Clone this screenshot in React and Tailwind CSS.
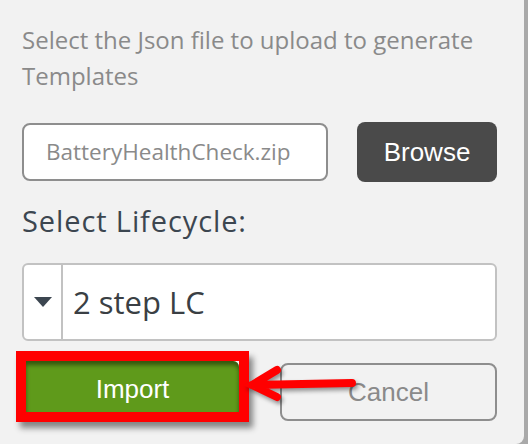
export default function App() {
  return (
    <div className="w-[528px] h-[444px] bg-[#a9a9a9] overflow-hidden">
      <div
        className="relative w-[524px] h-[444px] bg-[#f2f2f2] rounded-br-[8px] px-[22px] pt-[22px]"
        style={{ fontFamily: "'Open Sans', 'Liberation Sans', sans-serif" }}
      >
        <p className="text-[24px] leading-[36px] text-[#8a8a8a]">
          Select the Json file to upload to generate Templates
        </p>

        <div className="mt-[28px] flex items-center gap-[29px]">
          <div className="w-[306px] h-[58px] rounded-[8px] border-2 border-[#8e8e8e] bg-white flex items-center pl-[22px] text-[22.5px] text-[#8a8a8a]">
            BatteryHealthCheck.zip
          </div>
          <button
            type="button"
            className="w-[140px] h-[60px] rounded-[8px] bg-[#4a4a4a] text-white text-[26px] font-['Liberation_Sans',sans-serif]"
          >
            Browse
          </button>
        </div>

        <div className="mt-[23px] text-[29px] tracking-[0.9px] leading-[32px] text-[#3c4650]">Select Lifecycle:</div>

        <div className="mt-[26px] w-[475px] h-[78px] rounded-[6px] border-2 border-[#c2c2c2] bg-white flex">
          <div className="w-[39px] border-r-2 border-[#c2c2c2] flex items-center justify-center">
            <svg width="18" height="10" viewBox="0 0 18 10">
              <path d="M0 0 H18 L9 10 Z" fill="#3c4650" />
            </svg>
          </div>
          <div className="flex items-center pl-[10px] text-[31px] text-[#3a3f44]">2 step LC</div>
        </div>

        <div className="mt-[10px] flex items-start">
          <div className="-ml-[6px] border-[10px] border-[#ff0000] shadow-[4px_6px_6px_rgba(0,0,0,0.45)]">
            <button
              type="button"
              className="w-[213px] h-[51px] pt-[5px] bg-[#5f9a1b] text-white text-[26px] font-['Liberation_Sans',sans-serif] rounded-tr-[6px] shadow-[inset_0_4px_4px_rgba(0,0,0,0.45)]"
            >
              Import
            </button>
          </div>
          <button
            type="button"
            className="ml-[31px] mt-[12px] w-[217px] h-[58px] rounded-[8px] border-2 border-[#8e8e8e] text-[#8a8a8a] text-[26px] font-['Liberation_Sans',sans-serif]"
          >
            Cancel
          </button>
        </div>

        <svg
          className="absolute left-[244px] top-[364px]"
          width="116"
          height="40"
          viewBox="0 0 116 40"
          style={{ filter: "drop-shadow(2px 3px 2px rgba(0,0,0,0.4))" }}
        >
          <path
            d="M108 19 L8 21 M33 6 L8 21 L33 33"
            stroke="#ff0000"
            strokeWidth="8"
            strokeLinecap="round"
            strokeLinejoin="miter"
            fill="none"
          />
        </svg>
      </div>
    </div>
  );
}
